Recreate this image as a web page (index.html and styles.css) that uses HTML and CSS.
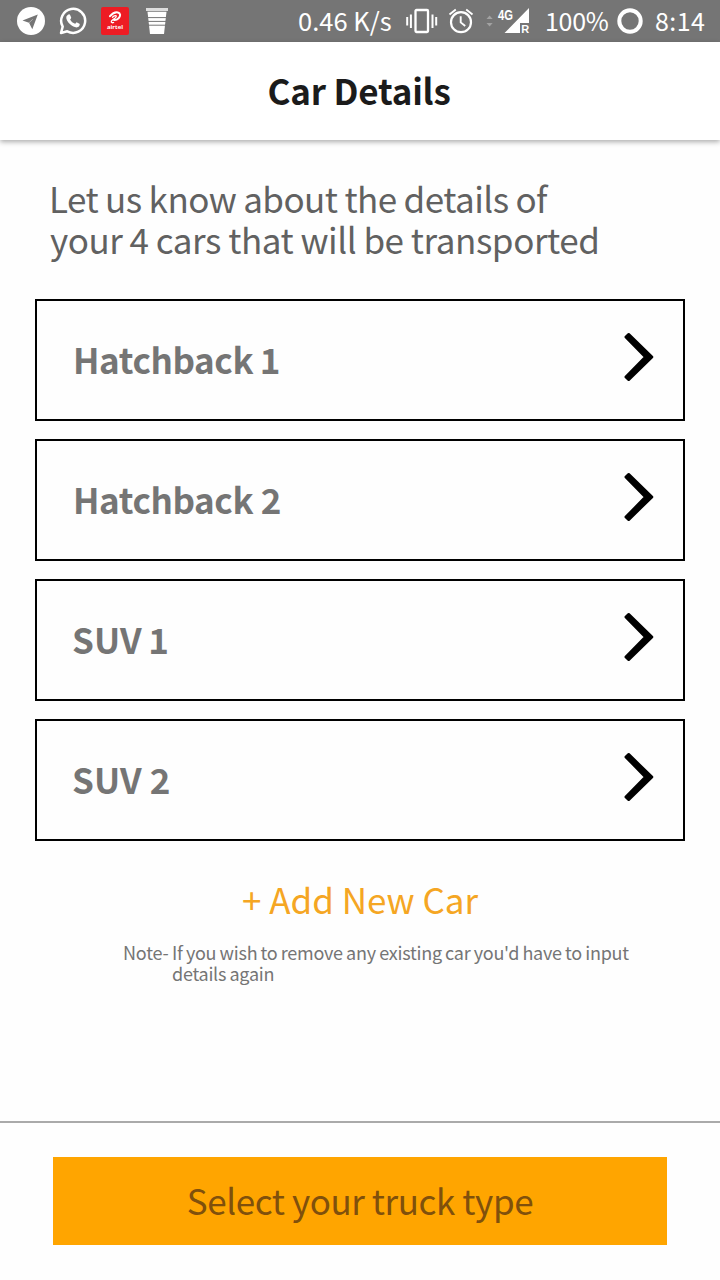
FILE: index.html
```html
<!DOCTYPE html>
<html lang="en">
<head>
<meta charset="utf-8">
<title>Car Details</title>
<link rel="stylesheet" href="styles.css">
</head>
<body>
<div class="status">
  <div class="notifications">
    <svg width="28" height="28" viewBox="0 0 28 28"><circle cx="14" cy="14" r="14" fill="#fff"/><path d="M5.5 13.6 20.8 7.6 15.3 22.2 12 15.8Z" fill="#757575"/><path d="M12 15.8 15.8 12.2" stroke="#fff" stroke-width=".4"/></svg>
    <svg width="28" height="28" viewBox="0 0 28 28"><path d="M2 26 3.7 19.7A12 12 0 1 1 8.3 24.3Z" fill="none" stroke="#fff" stroke-width="2.5" stroke-linejoin="round"/><path d="M9.5 7.6c.6-.4 1.3-.3 1.6.3l1.1 2.5c.2.7-1 1.6-1.1 2.1 1.2 2.2 2.8 3.5 5 4.3.6-.2 1.2-1.7 1.9-1.4l2.5 1.3c.8.5-.1 2.7-1.5 3.4-2.1.9-5.3-.4-7.9-2.8-2.6-2.5-4.1-5-3.8-7 .1-1.2 1-2.1 2.2-2.7Z" fill="#fff"/></svg>
    <div class="airtel">
      <svg width="14" height="13" viewBox="0 0 14 13"><path d="M2 5.2C4 2.8 7.2 1 9.8 1.4 12.6 2 12.8 5 10.6 7.2 9.3 8.5 7.4 9.2 6 9" fill="none" stroke="#fff" stroke-width="2" stroke-linecap="round"/><path d="M4.5 6.2C6.3 4.5 8.6 4 8.2 5.6 7.8 7.4 4.6 8.4 3.4 10.2c-.6 1.2.8 1.9 2.2 1.3" fill="none" stroke="#fff" stroke-width="1.3" stroke-linecap="round"/></svg>
      <span>airtel</span>
    </div>
    <svg width="24" height="28" viewBox="0 0 24 28"><path d="M1 1H23V4H1Z" fill="#ddd"/><path d="M2.5 4.7H21.5L19 27H5Z" fill="#fff"/><path d="M2 10.6H22M2 14.4H22M2 18.2H22" stroke="#757575" stroke-width="1"/></svg>
  </div>
  <div class="system">
    <span class="speed">0.46 K/s</span>
    <svg class="vibrate" width="32" height="26" viewBox="0 0 32 26"><rect x="9.5" y="2" width="12.5" height="22" rx="1" fill="none" stroke="#fff" stroke-width="2.3"/><path d="M1.2 9V17.5M4.9 6.5V20M26.5 6.5V20M30.2 9V17.5" stroke="#fff" stroke-width="2"/></svg>
    <svg class="alarm" width="26" height="26" viewBox="0 0 26 26"><circle cx="13" cy="14.2" r="10" fill="none" stroke="#fff" stroke-width="2.2"/><path d="M1.5 6.4 7.8 1.4M18.2 1.4 24.5 6.4M12.7 8.2V14.4L17.2 18" fill="none" stroke="#fff" stroke-width="1.9"/></svg>
    <svg class="signal" width="44" height="28" viewBox="0 0 44 28"><path d="M.5 12 3.6 8.5 6.7 12ZM.5 16H6.7L3.6 19.5Z" fill="#a2a2a2"/><path d="M18.5 26 43 1V16H34V26Z" fill="#fff"/><text x="12" y="12.8" class="network" textLength="15" lengthAdjust="spacingAndGlyphs">4G</text><text x="35.2" y="26" class="roaming">R</text></svg>
    <span class="percent">100%</span>
    <svg class="battery" width="26" height="26" viewBox="0 0 26 26"><circle cx="13" cy="13" r="10.7" fill="none" stroke="#fff" stroke-width="4"/></svg>
    <span class="clock">8:14</span>
  </div>
</div>
<header class="header"><h1>Car Details</h1></header>
<main class="content">
  <div class="intro"><p class="intro-first">Let us know about the details of</p><p class="intro-second">your 4 cars that will be transported</p></div>
  <div class="cars">
    <div class="car"><span class="hatch one">Hatchback 1</span><svg class="chevron" width="30" height="50" viewBox="0 0 30 50"><path d="M4.7 2.3 28 25 4.7 47.7 1.8 45 21.4 25 1.8 5Z" stroke="#000" stroke-width="2.6" stroke-linejoin="round"/></svg></div>
    <div class="car"><span class="hatch">Hatchback 2</span><svg class="chevron" width="30" height="50" viewBox="0 0 30 50"><path d="M4.7 2.3 28 25 4.7 47.7 1.8 45 21.4 25 1.8 5Z" stroke="#000" stroke-width="2.6" stroke-linejoin="round"/></svg></div>
    <div class="car"><span class="suv one">SUV 1</span><svg class="chevron" width="30" height="50" viewBox="0 0 30 50"><path d="M4.7 2.3 28 25 4.7 47.7 1.8 45 21.4 25 1.8 5Z" stroke="#000" stroke-width="2.6" stroke-linejoin="round"/></svg></div>
    <div class="car"><span class="suv">SUV 2</span><svg class="chevron" width="30" height="50" viewBox="0 0 30 50"><path d="M4.7 2.3 28 25 4.7 47.7 1.8 45 21.4 25 1.8 5Z" stroke="#000" stroke-width="2.6" stroke-linejoin="round"/></svg></div>
  </div>
  <div class="add">+ Add New Car</div>
  <div class="note"><span class="note-label">Note-</span><div class="note-text"><p>If you wish to remove any existing car you'd have to input</p><p>details again</p></div></div>
</main>
<footer class="footer"><div class="button">Select your truck type</div></footer>
</body>
</html>
```
FILE: styles.css
```css
* { box-sizing: border-box; }
body {
  margin: 0;
  width: 720px;
  height: 1280px;
  display: flex;
  flex-direction: column;
  overflow: hidden;
  background: #fefefe;
  font-family: "Noto Sans CJK SC", "Noto Sans", sans-serif;
  white-space: nowrap;
}
h1, p { margin: 0; }
svg { display: block; flex: none; }
.status {
  flex: none;
  height: 42px;
  background: #757575;
  color: #fff;
  display: flex;
  justify-content: space-between;
  padding: 0 14px 0 17px;
}
.notifications { display: flex; align-items: center; gap: 14px; }
.airtel {
  width: 28px;
  height: 28px;
  border-radius: 2px;
  background: #ed1c24;
  display: flex;
  flex-direction: column;
  align-items: center;
  padding-top: 4px;
}
.airtel span { font: bold 6px/7px "Open Sans", sans-serif; }
.notifications > svg:last-child { margin-left: 2px; }
.system { display: flex; align-items: center; font-size: 25px; line-height: 40px; }
.speed, .percent, .clock { height: 42px; }
.speed { width: 95px; font-size: 25.5px; }
.vibrate { margin-left: 13px; }
.alarm { margin-left: 10px; }
.signal { margin-left: 12px; }
.network { font: bold 14px "Liberation Sans", sans-serif; fill: #fff; }
.roaming { font: bold 11px "Liberation Sans", sans-serif; fill: #fff; }
.percent { width: 64px; margin-left: 15px; letter-spacing: -.3px; }
.battery { margin-left: 8px; }
.clock { width: 51px; margin-left: 12px; letter-spacing: .4px; }
.header {
  flex: none;
  height: 98px;
  background: #fff;
  box-shadow: 0 2px 5px rgba(0, 0, 0, .32);
  text-align: center;
}
h1 { padding-right: 2px; font-size: 35px; line-height: 96px; letter-spacing: -.2px; color: #1b1b1b; }
.content { flex: 1; padding: 37px 35px 0; }
.intro { padding-left: 14px; font-size: 35px; line-height: 41px; color: #616161; }
.intro-first { letter-spacing: -.55px; word-spacing: -.3px; }
.intro-second { padding-left: 1px; letter-spacing: -.42px; word-spacing: -.3px; }
.cars { display: flex; flex-direction: column; gap: 18px; margin-top: 40px; }
.car {
  height: 122px;
  border: 2px solid #000;
  display: flex;
  justify-content: space-between;
  align-items: center;
  padding: 0 29px 0 36px;
  color: #757575;
  font-size: 35px;
  font-weight: bold;
}
.car span { padding-bottom: 4px; }
.hatch { letter-spacing: -.4px; }
.hatch.one { word-spacing: -1px; }
.suv { margin-left: -1px; letter-spacing: .1px; }
.suv.one { word-spacing: -1.5px; }
.chevron { position: relative; top: -3px; }
.add { margin-top: 34px; text-align: center; font-size: 35px; line-height: 48px; color: #f5a623; }
.note { display: flex; margin: 19px 0 0 88px; font-size: 18px; line-height: 21px; color: #757575; }
.note-label { width: 49px; letter-spacing: -.2px; }
.note-text { letter-spacing: -.25px; word-spacing: -.5px; }
.footer { flex: none; height: 159px; border-top: 2px solid #aaa; padding: 34px 53px 0; }
.button {
  height: 88px;
  background: #ffa500;
  color: #80500c;
  font-size: 35px;
  line-height: 86px;
  letter-spacing: -.42px;
  word-spacing: 0;
  text-align: center;
}
```
